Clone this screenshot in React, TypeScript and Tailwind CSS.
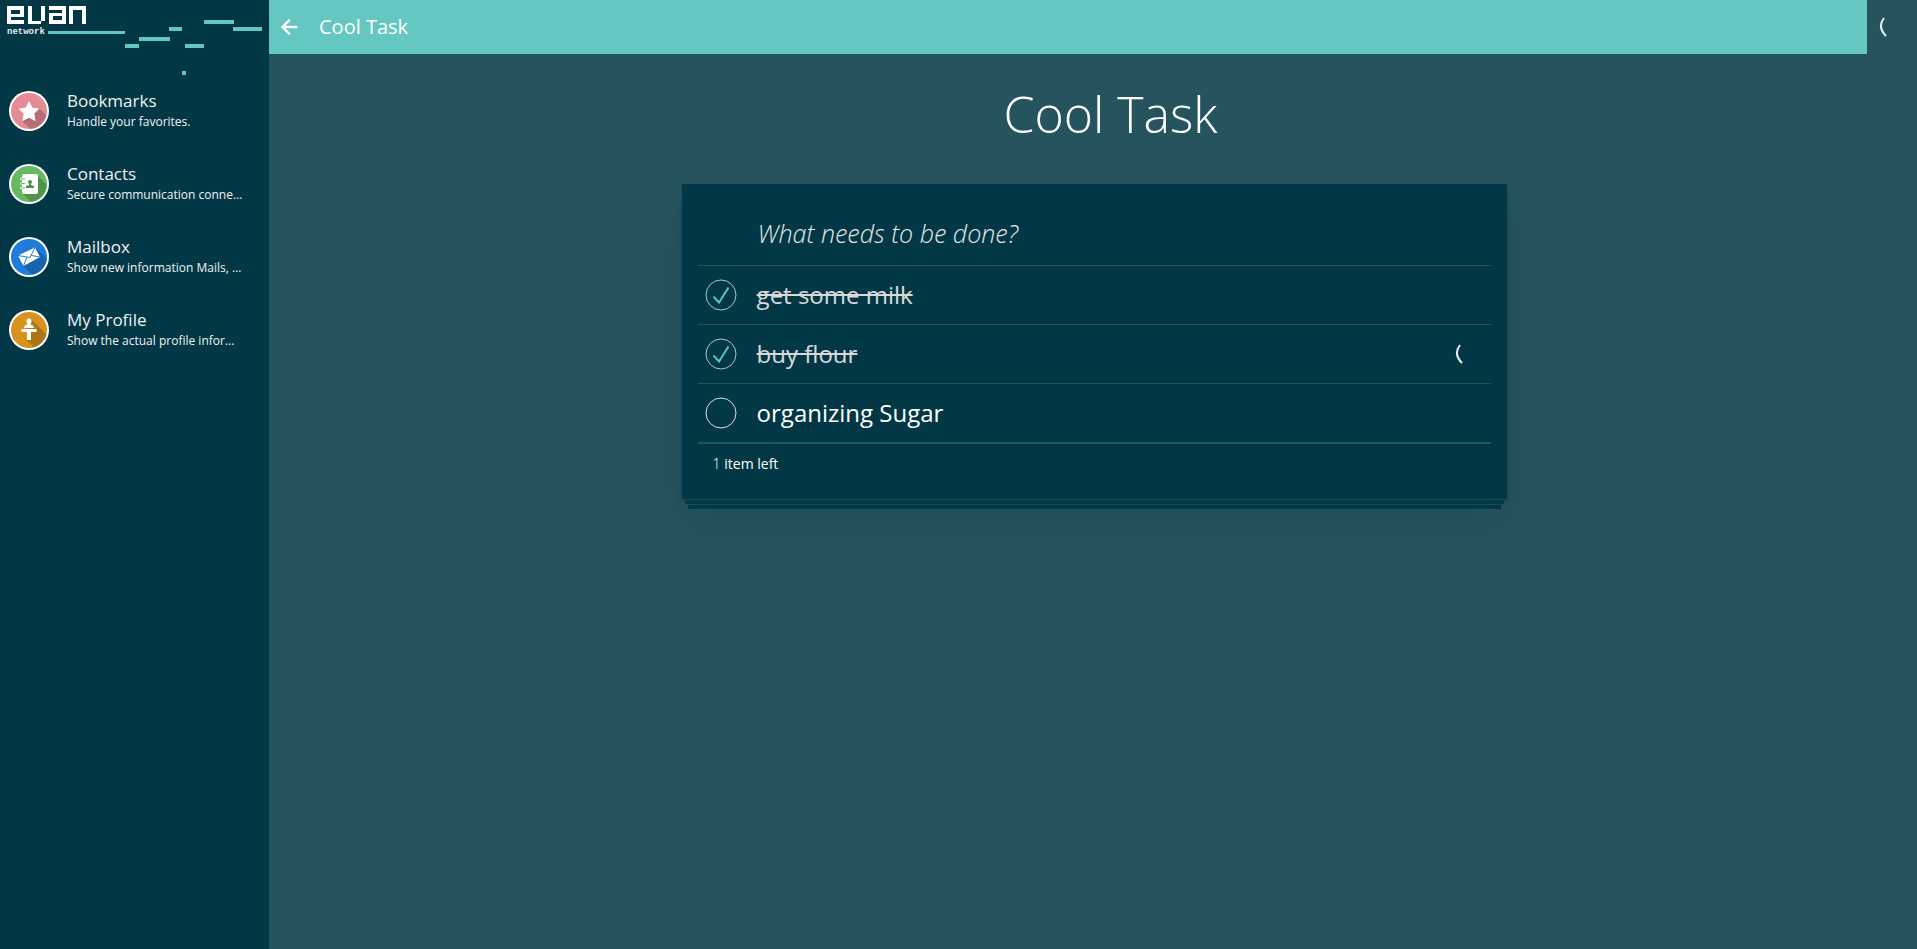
import React from "react";

const SHADE = "rgba(0,0,0,0.2)";

function Logo() {
  return (
    <svg className="block" width="269" height="80" viewBox="0 0 269 80" role="img" aria-label="evan network">
      <g fill="#ffffff">
        <rect x="7" y="6" width="4" height="18" />
        <rect x="7" y="6" width="17" height="4" />
        <rect x="20" y="6" width="4" height="11" />
        <rect x="7" y="14" width="17" height="3" />
        <rect x="7" y="20" width="17" height="4" />
        <rect x="28" y="6" width="4" height="18" />
        <rect x="28" y="21" width="13" height="3" />
        <rect x="41" y="6" width="4" height="15" />
        <rect x="49" y="6" width="17" height="4" />
        <rect x="62" y="6" width="4" height="18" />
        <rect x="49" y="13" width="17" height="3" />
        <rect x="49" y="13" width="4" height="11" />
        <rect x="49" y="20" width="17" height="4" />
        <rect x="69" y="6" width="17" height="4" />
        <rect x="69" y="6" width="4" height="18" />
        <rect x="82" y="6" width="4" height="18" />
      </g>
      <text x="7" y="34" fill="#e6ebec" fontSize="9" fontWeight="700" fontFamily="'Liberation Mono', monospace">network</text>
      <g fill="#64c7c1">
        <rect x="48" y="31" width="77" height="3" />
        <rect x="125" y="44" width="14" height="4" />
        <rect x="139" y="37" width="31" height="4" />
        <rect x="169" y="27" width="13" height="4" />
        <rect x="185" y="44" width="19" height="4" />
        <rect x="204" y="20" width="30" height="4" />
        <rect x="233" y="27" width="29" height="4" />
        <rect x="182" y="71" width="4" height="4" />
      </g>
    </svg>
  );
}

function Badge({ id, color, shadow, children }: { id: string; color: string; shadow: string; children: React.ReactNode }) {
  return (
    <svg className="size-10 shrink-0" viewBox="0 0 40 40" aria-hidden="true">
      <clipPath id={id}>
        <circle cx="20" cy="20" r="18" />
      </clipPath>
      <circle cx="20" cy="20" r="20" fill="#ffffff" />
      <circle cx="20" cy="20" r="18" fill={color} />
      <path d={shadow} fill={SHADE} clipPath={`url(#${id})`} />
      {children}
    </svg>
  );
}

const apps = [
  {
    title: "Bookmarks",
    text: "Handle your favorites.",
    icon: (
      <Badge id="clip-bookmarks" color="#e58b95" shadow="M30 17 L44 31 L30 46 L13 30 L20 22 Z">
        <path
          d="M20 10.8 L23 17 L29.6 17.9 L24.8 22.6 L26 29.4 L20 26.2 L14 29.4 L15.2 22.6 L10.4 17.9 L17 17 Z"
          fill="#fff" stroke="#fff" strokeWidth="1" strokeLinejoin="round"
        />
      </Badge>
    ),
  },
  {
    title: "Contacts",
    text: "Secure communication connections.",
    icon: (
      <Badge id="clip-contacts" color="#65ba60" shadow="M28 11 L44 27 L44 44 L28 44 L13 29 L20 20 Z">
        <rect x="13" y="10" width="16" height="20" rx="2" fill="#fff" />
        <path d="M12.500 15 h3 M12.500 19.500 h3 M12.500 24 h3" stroke="#fff" strokeWidth="2.6" strokeLinecap="round" />
        <path d="M12.500 15 h3 M12.500 19.500 h3 M12.500 24 h3" stroke="#65ba60" strokeWidth="1" strokeLinecap="round" />
        <circle cx="21" cy="18" r="2" fill="#4c9448" />
        <path d="M20 19 h2 v2 l3 1 v2 h-8 v-2 l3 -1 Z" fill="#4c9448" />
      </Badge>
    ),
  },
  {
    title: "Mailbox",
    text: "Show new information Mails, and requests.",
    icon: (
      <Badge id="clip-mailbox" color="#1f7cd9" shadow="M27 11 L44 28 L44 46 L32 46 L14 29 Z">
        <path d="M9 18.5 L26 10.5 L31 20 L14.5 29 Z" fill="#fff" />
        <path d="M9 18.5 L21 20.5 L26 10.5 M14.5 29 L18 20 M31 20 L22.5 18.5" fill="none" stroke="#1f7cd9" strokeWidth="1" />
      </Badge>
    ),
  },
  {
    title: "My Profile",
    text: "Show the actual profile information.",
    icon: (
      <Badge id="clip-profile" color="#d8931f" shadow="M22 9 L44 31 L40 44 L30 44 L18 30 L18 22 Z">
        <circle cx="20" cy="11" r="2.6" fill="#fff" />
        <path d="M18.5 12 h3 v2.5 q3.5 .5 3.5 3.5 h-10 q0 -3 3.5 -3.5 Z M12.5 19 h15 v3 h-5.500 v8 h-4 v-8 h-5.500 Z" fill="#fff" />
      </Badge>
    ),
  },
];

const todos = [
  { text: "get some milk", done: true, busy: false },
  { text: "buy flour", done: true, busy: true },
  { text: "organizing Sugar", done: false, busy: false },
];

function Spinner() {
  return (
    <svg className="h-6 w-2 shrink-0" viewBox="0 0 8 24" role="status" aria-label="Loading">
      <path d="M5 3 Q-2 12 7 21" fill="none" stroke="#e9eeef" strokeWidth="2" />
    </svg>
  );
}

export default function App() {
  return (
    <div className="flex min-h-screen bg-[#25545f] font-['Open_Sans','Noto_Sans',sans-serif] text-white">
      <aside className="w-[269px] shrink-0 bg-[#023845]">
        <Logo />
        <nav className="flex flex-col">
          {apps.map((app) => (
            <a key={app.title} href="#" className="flex h-[73px] items-start gap-[18px] pt-[11px] pr-6 pl-[9px]">
              {app.icon}
              <span className="flex min-w-0 flex-col text-[#eef2f3]">
                <span className="text-[17px] leading-5">{app.title}</span>
                <span className="truncate text-xs leading-[22px]">{app.text}</span>
              </span>
            </a>
          ))}
        </nav>
      </aside>

      <div className="flex min-w-0 grow flex-col">
        <header className="flex h-[54px]">
          <div className="flex grow items-center gap-[18px] bg-[#64c7c1] pl-2">
            <button type="button" aria-label="Back" className="flex size-6 items-center justify-center">
              <svg className="size-6" viewBox="0 0 24 24" fill="#ffffff" stroke="#ffffff" strokeWidth="0.5" aria-hidden="true">
                <path d="M20 11H7.830l5.590-5.590L12 4l-8 8 8 8 1.410-1.410L7.830 13H20v-2z" />
              </svg>
            </button>
            <span className="text-xl">Cool Task</span>
          </div>
          <div className="flex w-[50px] items-center pl-3">
            <Spinner />
          </div>
        </header>

        <main className="flex flex-col items-center pt-6 pl-[3px]">
          <h1 className="pl-8 text-[50px] leading-[72px] font-light">Cool Task</h1>
          <section className="mt-[34px] w-[50.2%] bg-[#023845] px-4 pt-4 shadow-[0_1px_0_#1a4a56,0_8px_0_-3px_#023845,0_9px_0_-3px_#1a4a56,0_13px_0_-6px_#023845,0_16px_0_-6px_#023845,0_2px_4px_0_rgba(0,0,0,0.2),0_25px_50px_0_rgba(0,0,0,0.1)]">
            <input
              type="text"
              aria-label="New task"
              placeholder="What needs to be done?"
              className="block h-[65px] w-full bg-transparent pl-[60px] text-[25px] outline-none placeholder:font-light placeholder:text-[#e6e6e6] placeholder:italic"
            />
            <ul className="border-b border-[#25545f]">
              {todos.map((todo) => (
                <li key={todo.text} className="border-t border-[#25545f] last:border-b">
                  <label className="flex h-[58px] items-center pr-7 pl-[7px]">
                    <input type="checkbox" defaultChecked={todo.done} className="sr-only" />
                    <svg className="size-8 shrink-0" viewBox="0 0 32 32" fill="none" aria-hidden="true">
                      <circle cx="16" cy="16" r="15" stroke={todo.done ? "#a3ccc4" : "#d5dfe0"} />
                      {todo.done && <path d="M8.500 17.500 L14 23.500 L23.500 8.500" stroke="#5dc2af" strokeWidth="2" />}
                    </svg>
                    <span className={todo.done ? "grow pl-5 text-2xl text-[#d9d9d9] line-through" : "grow pl-5 text-2xl"}>
                      {todo.text}
                    </span>
                    {todo.busy && <Spinner />}
                  </label>
                </li>
              ))}
            </ul>
            <footer className="h-[55px] pt-[9px] pl-[15px] text-sm leading-[22px]">
              <strong className="font-light">1</strong> item left
            </footer>
          </section>
        </main>
      </div>
    </div>
  );
}
